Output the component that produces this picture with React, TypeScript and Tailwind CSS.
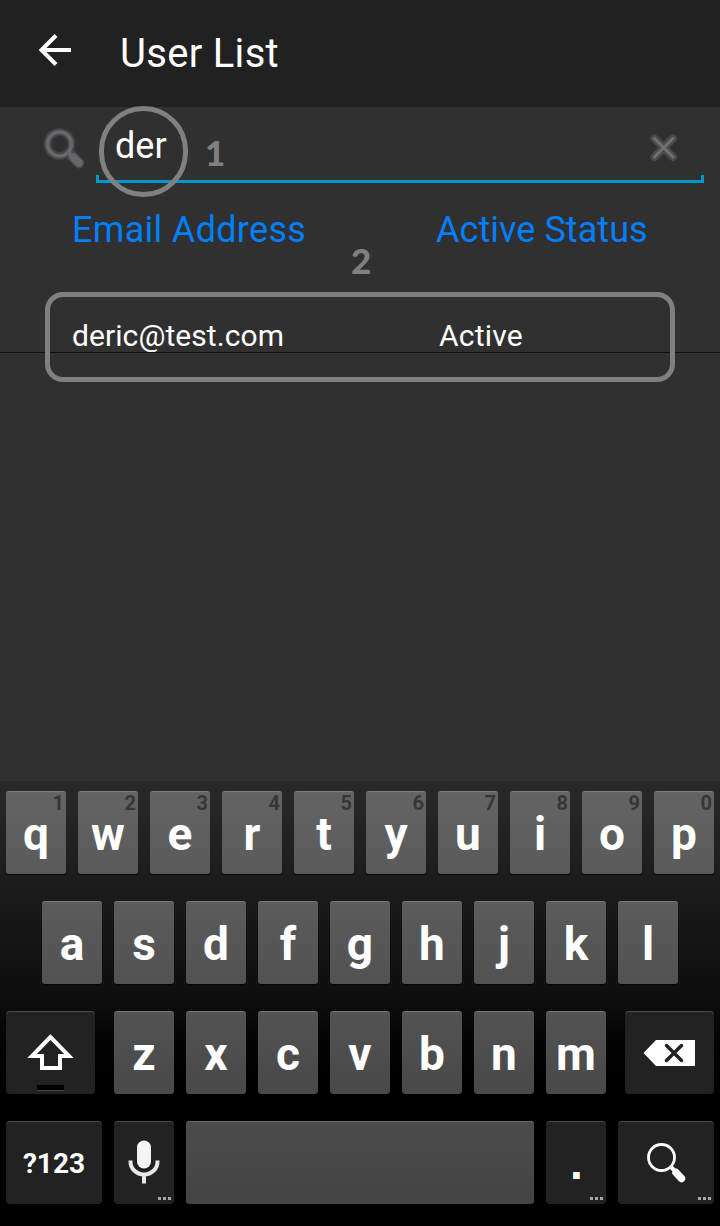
import type { ReactNode } from "react";

const letterKey =
  "relative h-[83px] rounded-[3px] flex justify-center shadow-[0_1px_1px_rgba(0,0,0,0.6),inset_0_2px_1px_-1px_rgba(255,255,255,0.2)]";
const darkKey =
  "relative h-[83px] rounded-[4px] bg-[#222222] flex justify-center shadow-[inset_0_2px_1px_-1px_rgba(255,255,255,0.2)]";

const topRow = [..."qwertyuiop"];
const homeRow = [..."asdfghjkl"];
const bottomRow = [..."zxcvbnm"];

function LetterKey({ label, hint, tone }: { label: string; hint?: string; tone: string }) {
  return (
    <div className={`${letterKey} w-[60px] ${tone}`}>
      <span className="mt-[15px] text-[46px] leading-[56px] font-bold text-white">{label}</span>
      {hint && (
        <span className="absolute right-[2px] top-0 text-[20px] leading-[24px] font-bold text-[#363636]">
          {hint}
        </span>
      )}
    </div>
  );
}

function MoreDots() {
  return (
    <span className="absolute right-[3px] bottom-[4px] flex gap-[2px]">
      <i className="h-[3px] w-[3px] bg-[#a8a8a8]" />
      <i className="h-[3px] w-[3px] bg-[#a8a8a8]" />
      <i className="h-[3px] w-[3px] bg-[#a8a8a8]" />
    </span>
  );
}

function Row({ children, className }: { children: ReactNode; className: string }) {
  return <div className={`flex h-[83px] gap-3 ${className}`}>{children}</div>;
}

export default function App() {
  return (
    <div
      className="relative flex h-[1226px] w-[720px] flex-col overflow-hidden bg-[#303030] text-white"
      style={{ fontFamily: 'Roboto, "Liberation Sans", sans-serif' }}
    >
      <header className="flex h-[107px] shrink-0 items-start bg-[#212121] pl-[38px]">
        <svg className="mt-[33px] h-[34px] w-[34px]" viewBox="0 0 34 34" fill="none" stroke="#fff" strokeWidth="4">
          <path d="M33 17H4M18 2.5 3.5 17 18 31.5" />
        </svg>
        <h1 className="mt-[30px] ml-[48px] text-[40px] leading-[48px] tracking-[0.3px] whitespace-nowrap">User List</h1>
      </header>

      <main className="flex h-[674px] shrink-0 flex-col">
        <div className="flex h-[76px] pl-[43px]">
          <svg className="mt-[20px] h-[42px] w-[43px] shrink-0" viewBox="0 0 43 42" fill="none">
            <circle cx="16.500" cy="17" r="12" stroke="#47474a" strokeWidth="7.5" />
            <path d="M27 27 36 36" stroke="#48484a" strokeWidth="11" strokeLinecap="round" />
            <circle cx="16.500" cy="17" r="12" stroke="#68686b" strokeWidth="3.5" />
            <path d="m25 25 4 4" stroke="#68686b" strokeWidth="4" />
            <path d="m30 30 6 6" stroke="#68686b" strokeWidth="7.5" strokeLinecap="round" />
          </svg>
          <div className="ml-[10px] flex w-[608px] flex-col justify-end">
            <div className="flex h-[69px] justify-between pl-[19px] pr-[26px]">
              <span className="mt-[17px] text-[36px] leading-[44px]">der</span>
              <svg className="mt-[27px] h-[28px] w-[28px]" viewBox="0 0 28 28" fill="none" strokeLinecap="round">
                <path d="m4.500 4.500 18.500 18.500M23 4.500 4.500 23" stroke="#4b4b4b" strokeWidth="8" />
                <path d="m4.500 4.500 18.500 18.500M23 4.500 4.500 23" stroke="#707070" strokeWidth="3" />
              </svg>
            </div>
            <div className="-mt-px h-[8px] border-x-[3px] border-b-[3px] border-[#0099cc]" />
          </div>
        </div>
        <div className="flex h-[109px] pt-[25px] pl-[72px] text-[36px] leading-[44px] text-[#007fff]">
          <span className="w-[364px] tracking-[0.3px]">Email Address</span>
          <span className="tracking-[0.05px]">Active Status</span>
        </div>
        <div className="flex h-[61px] overflow-hidden border-b border-[#111111] pt-[26px] pl-[72px] text-[30px] leading-[36px]">
          <span className="w-[367px] tracking-[0.08px]">deric@test.com</span>
          <span className="tracking-[0.2px]">Active</span>
        </div>
      </main>

      <div className="absolute left-[99px] top-[106px] h-[91px] w-[89px] rounded-full border-[5px] border-[#808080]" />
      <div className="absolute left-[45px] top-[292px] h-[90px] w-[630px] rounded-[18px] border-[5px] border-[#808080]" />
      <span
        className="absolute left-[205px] top-[131px] text-[35px] leading-[42px] font-black text-[#808080]"
        style={{ fontFamily: "Lato, sans-serif" }}
      >
        1
      </span>
      <span
        className="absolute left-[351px] top-[239px] text-[35px] leading-[42px] font-black text-[#808080]"
        style={{ fontFamily: "Lato, sans-serif" }}
      >
        2
      </span>

      <section className="flex h-[445px] shrink-0 flex-col gap-[27px] bg-linear-to-b from-[#292929] from-0% via-[#0d0d0d] via-50% to-black to-75% pt-[10px]">
        <Row className="px-[6px]">
          {topRow.map((k, i) => (
            <LetterKey key={k} label={k} hint={String((i + 1) % 10)} tone="bg-linear-to-b from-[#646464] to-[#5a5a5a]" />
          ))}
        </Row>
        <Row className="px-[42px]">
          {homeRow.map((k) => (
            <LetterKey key={k} label={k} tone="bg-linear-to-b from-[#5b5b5b] to-[#525252]" />
          ))}
        </Row>
        <Row className="justify-between px-[6px]">
          <div className={`${darkKey} w-[89px]`}>
            <svg className="mt-[22px] h-[38px] w-[50px]" viewBox="0 0 50 38" fill="none" stroke="#fff" strokeWidth="4">
              <path d="M24.500 4 6 23h10v12h18V23h9Z" />
            </svg>
            <span className="absolute bottom-[3px] left-[31px] h-[6px] w-[27px] border-b border-[#444444] bg-black" />
          </div>
          <div className="flex gap-3">
            {bottomRow.map((k) => (
              <LetterKey key={k} label={k} tone="bg-linear-to-b from-[#525252] to-[#494949]" />
            ))}
          </div>
          <div className={`${darkKey} w-[89px]`}>
            <svg className="mt-[29px] h-[26px] w-[53px]" viewBox="0 0 53 26" fill="none">
              <path d="M0.500 13 13 0h39v26H13Z" fill="#fff" />
              <path d="m23.500 5.500 15 15m0-15-15 15" stroke="#222" strokeWidth="3.5" strokeLinecap="round" />
            </svg>
          </div>
        </Row>
        <Row className="px-[6px]">
          <div className={`${darkKey} w-[96px]`}>
            <span className="mt-[26px] text-[28px] leading-[34px] font-bold">?123</span>
          </div>
          <div className={`${darkKey} w-[60px]`}>
            <svg className="mt-[19px] h-[44px] w-[32px]" viewBox="0 0 32 44" fill="none">
              <rect x="9" y="0.500" width="14" height="28" rx="7" fill="#f4f4f4" />
              <path d="M2.500 20.500v1C2.500 29 8.500 34.500 16 34.500S29.500 29 29.500 21.500v-1M16 34v9.500" stroke="#e8e8e8" strokeWidth="4" />
            </svg>
            <MoreDots />
          </div>
          <div className={`${letterKey} w-[348px] bg-linear-to-b from-[#4b4b4b] to-[#444444]`} />
          <div className={`${darkKey} w-[60px]`}>
            <span
              className="mt-[12px] ml-px text-[46px] leading-[60px] font-bold"
              style={{ fontFamily: '"Liberation Sans", sans-serif' }}
            >
              .
            </span>
            <MoreDots />
          </div>
          <div className={`${darkKey} w-[96px]`}>
            <svg className="mt-[21px] ml-px h-[42px] w-[42px]" viewBox="0 0 42 42" fill="none" stroke="#fff">
              <circle cx="15.500" cy="15.500" r="13" strokeWidth="2.8" />
              <path d="m24.500 24.500 5 5" strokeWidth="4" />
              <path d="m30 30.500 5.500 6" strokeWidth="7.500" strokeLinecap="round" />
            </svg>
            <MoreDots />
          </div>
        </Row>
      </section>
    </div>
  );
}
